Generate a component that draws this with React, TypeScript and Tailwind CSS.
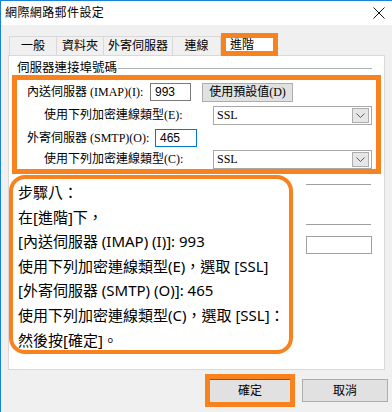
import React from 'react';

// Internet mail settings dialog, "advanced" tab, with orange annotation frames

const ORANGE = 'border-[#f7821e]';

const TABS = [
  { label: '一般', w: 'w-[48px]' },
  { label: '資料夾', w: 'w-[48px]' },
  { label: '外寄伺服器', w: 'w-[70px]' },
  { label: '連線', w: 'w-[49px]' },
];

const STEPS = [
  '步驟八：',
  '在[進階]下，',
  '[內送伺服器 (IMAP) (I)]: 993',
  '使用下列加密連線類型(E)，選取 [SSL]',
  '[外寄伺服器 (SMTP) (O)]: 465',
  '使用下列加密連線類型(C)，選取 [SSL]：',
  '然後按[確定]。',
];

function Chevron() {
  return (
    <svg width="9" height="5" viewBox="0 0 9 5" fill="none">
      <path d="M0.5 0.5 L4.5 4.5 L8.5 0.5" stroke="#5a5a5a" strokeWidth="1" />
    </svg>
  );
}

function Select({ value }: { value: string }) {
  return (
    <div className="w-[159px] h-[19px] border border-[#a8a8a8] bg-white flex items-center justify-between pl-[3px] pr-[2px]">
      <span className="text-[12px] leading-none">{value}</span>
      <span className="w-[17px] h-[15px] bg-[#e6e6e6] border border-[#adadad] flex items-center justify-center">
        <Chevron />
      </span>
    </div>
  );
}

export default function App() {
  return (
    <div className="w-[392px] h-[412px] bg-[#f0f0f0] border-l border-t border-[#1883d7] overflow-hidden text-black font-['Noto_Sans','Noto_Sans_CJK_TC',sans-serif]">
      {/* Title bar */}
      <div className="h-[24px] bg-white flex items-center justify-between pl-[4px] pr-[7px]">
        <span className="text-[12px] leading-none tracking-[0.4px]">網際網路郵件設定</span>
        <svg width="12" height="12" viewBox="0 0 12 12" className="mb-[1px]">
          <path d="M0.5 0.5 L11.5 11.5 M11.5 0.5 L0.5 11.5" stroke="#111" strokeWidth="1" />
        </svg>
      </div>

      {/* Tabs */}
      <div className="relative z-10 h-[31px] flex items-end pl-[8px]">
        {TABS.map(({ label, w }) => (
          <div
            key={label}
            className={`${w} h-[19px] mb-[1px] border border-b-0 border-[#d9d9d9] -ml-px first:ml-0 flex items-center justify-center text-[12px] leading-none`}
          >
            {label}
          </div>
        ))}
        <div className={`w-[57px] h-[23px] border-[5px] ${ORANGE} bg-white flex items-center pl-[4px] text-[12px] leading-none`}>
          進階
        </div>
      </div>

      {/* Panel */}
      <div className="-mt-px ml-[7px] w-[377px] h-[315px] bg-white border border-[#d9d9d9]">
        <div className="h-[19px] flex items-end pl-[8px]">
          <span className="text-[12.5px] leading-[14px]">伺服器連接埠號碼</span>
          <span className="flex-1 h-px bg-[#b0b0b0] ml-[1px] mr-[12px] mb-[6px]" />
        </div>

        {/* Port settings */}
        <div className={`ml-[3px] w-[369px] h-[99px] border-[5px] ${ORANGE} flex flex-col font-['Liberation_Serif','Noto_Sans_CJK_TC',serif] text-[12px]`}>
          <div className="mt-[2px] h-[20px] flex items-center">
            <span className="w-[133px] pl-[10px] leading-none">內送伺服器 (IMAP)(I):</span>
            <span className="w-[41px] h-[18px] border border-[#7a7a7a] flex items-center pl-[4px] font-['Liberation_Sans',sans-serif] text-[12px]">993</span>
            <span className="ml-[11px] w-[91px] h-[19px] bg-[#e1e1e1] border border-[#adadad] flex items-center justify-center leading-none">使用預設值(D)</span>
          </div>
          <div className="mt-[3px] h-[20px] flex items-center">
            <span className="w-[196px] pl-[27px] leading-none">使用下列加密連線類型(E):</span>
            <Select value="SSL" />
          </div>
          <div className="mt-[3px] h-[20px] flex items-center">
            <span className="w-[138px] pl-[10px] leading-none">外寄伺服器 (SMTP)(O):</span>
            <span className="w-[42px] h-[18px] border border-[#0078d7] flex items-center pl-[4px] font-['Liberation_Sans',sans-serif] text-[12px]">465</span>
          </div>
          <div className="mt-[1px] h-[20px] flex items-center">
            <span className="w-[196px] pl-[27px] leading-none">使用下列加密連線類型(C):</span>
            <Select value="SSL" />
          </div>
        </div>

        <div className="mt-[1px] flex">
          {/* Step notes */}
          <div className={`w-[284px] h-[179px] border-[4px] ${ORANGE} rounded-[16px] pl-[5px] pt-[1px] text-[15px] leading-[24.6px] whitespace-nowrap overflow-hidden`}>
            {STEPS.map((line) => (
              <div key={line}>{line}</div>
            ))}
          </div>
          <div className="ml-[13px] w-[66px] flex flex-col">
            <div className="mt-[9px] h-px bg-[#a0a0a0] mr-px" />
            <div className="mt-[39px] h-px bg-[#a0a0a0] mr-px" />
            <div className="mt-[11px] h-[18px] border border-[#a0a0a0]" />
          </div>
        </div>
      </div>

      {/* Buttons */}
      <div className="flex justify-end items-center gap-[7px] pr-[4px] mt-[4px]">
        <div className={`w-[90px] h-[33px] border-[5px] ${ORANGE} bg-[#e1e1e1] border-t-[5px]`}>
          <div className="h-full border-t border-[#0078d7] flex items-center justify-center text-[12px] leading-none">確定</div>
        </div>
        <div className="w-[86px] h-[23px] bg-[#e1e1e1] border border-[#adadad] flex items-center justify-center text-[12px] leading-none">
          取消
        </div>
      </div>
    </div>
  );
}
